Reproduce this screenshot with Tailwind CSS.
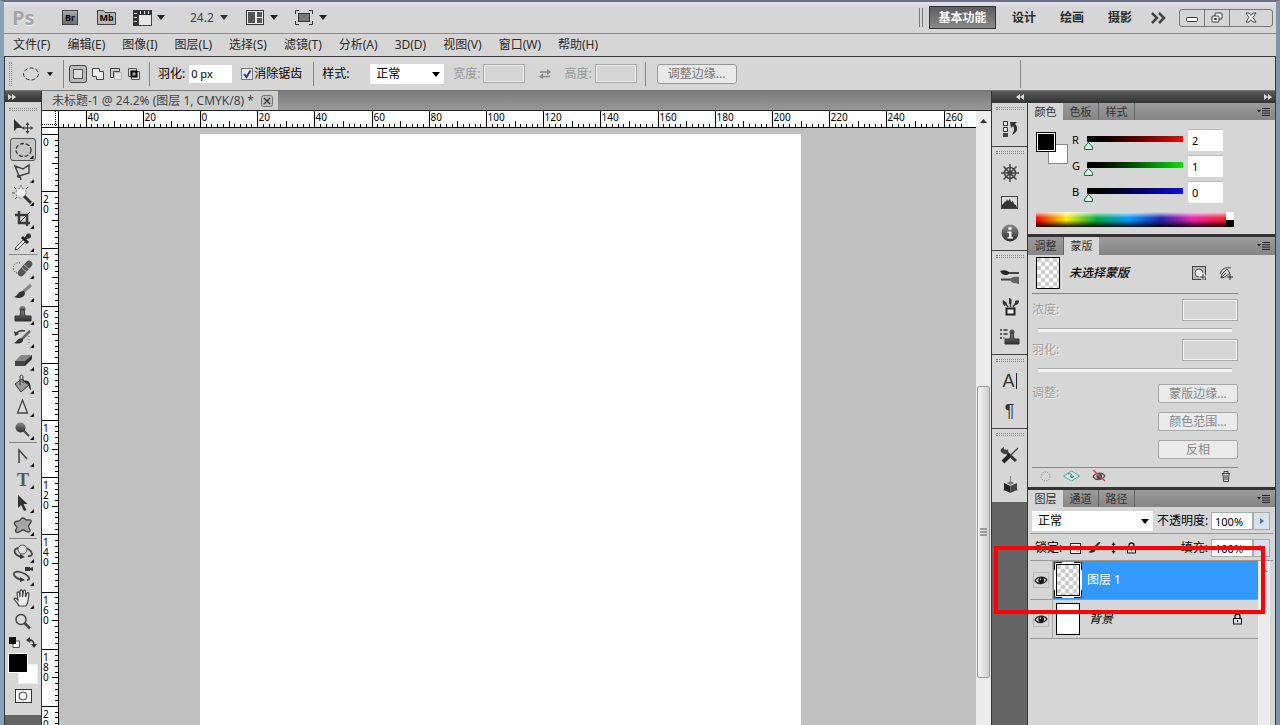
<!DOCTYPE html>
<html lang="zh-CN">
<head>
<meta charset="utf-8">
<title>未标题-1 @ 24.2%</title>
<script src="https://cdn.jsdelivr.net/npm/@tailwindcss/browser@4"></script>
</head>
<body class="h-screen overflow-hidden bg-[#d6d6d6] font-['Noto_Sans','Noto_Sans_CJK_SC',sans-serif] text-xs text-[#2a2a2a]">
<svg class="absolute size-0" aria-hidden="true">
  <symbol id="caret" viewBox="0 0 8 5"><path d="M0 0h8L4 5z" fill="currentColor"/></symbol>
  <symbol id="more" viewBox="0 0 22 22"><path d="M22 17v4h-4z" fill="#000"/></symbol>
  <symbol id="menu" viewBox="0 0 14 8"><path d="M0 2h4L2 4.500z" fill="#222"/><path d="M5 .5h8M5 2.800h8M5 5.100h8M5 7.400h8" stroke="#222"/></symbol>
  <symbol id="eye" viewBox="0 0 14 10"><path d="M1 6C3 1.500 10 .5 13 5M1 6c3 3.500 9 3.500 12-1" fill="none" stroke="#222" stroke-width="1.300"/><circle cx="7.200" cy="5.200" r="2.800" fill="#111"/><circle cx="6.500" cy="4.300" r=".8" fill="#fff"/></symbol>
  <symbol id="lock" viewBox="0 0 11 12"><path d="M3 5V3.500a2.500 2.500 0 0 1 5 0V5" fill="none" stroke="#111" stroke-width="1.300"/><rect x="1.500" y="5.500" width="8" height="5.500" fill="#ddd" stroke="#111"/><path d="M5.500 7v2" stroke="#111"/></symbol>
  <pattern id="checker" width="8" height="8" patternUnits="userSpaceOnUse"><rect width="8" height="8" fill="#fff"/><path d="M0 0h4v4H0zM4 4h4v4H4z" fill="#ccc"/></pattern>
  <linearGradient id="metal" x1="0" y1="0" x2="0" y2="1"><stop offset="0" stop-color="#8a8a8a"/><stop offset="1" stop-color="#2c2c2c"/></linearGradient>
</svg>

<div class="flex h-full flex-col border-t-2 border-r-4 border-l-4 border-t-[#6a6f86] border-r-[#7e93ad] border-l-[#8aa0b8]">

  <!-- Application bar -->
  <header class="flex h-8 shrink-0 items-center border-b border-[#8c8c8c] bg-linear-to-b from-[#e2e2e8] via-[#d6d6d6] via-20% to-[#d6d6d6] pl-2">
    <span class="w-[50px] font-['Open_Sans'] text-xl leading-8 font-bold text-[#a5a5a5] [text-shadow:0_1px_0_#f4f4f4]">Ps</span>
    <button class="flex h-[15px] w-4 items-center justify-center border border-[#444] bg-linear-to-b from-[#aaa] to-[#6e6e6e] text-[9px] font-bold text-black" aria-label="Bridge">Br</button>
    <button class="relative ml-[19px] flex h-[15px] w-[19px] items-center justify-center text-[9px] font-bold text-black" aria-label="Mini Bridge"><svg class="absolute inset-0" width="19" height="15"><path d="M.5.500h6l1.500 2h10.500v12H.5z" fill="#b5b5b5" stroke="#444"/></svg><span class="relative">Mb</span></button>
    <button class="ml-[17px] flex items-center text-[#222]" aria-label="查看额外内容"><svg width="19" height="16"><rect x="5.500" y="4.500" width="13" height="11" fill="#e8e8e8" stroke="#444"/><path d="M0 0h19v5H5v11H0z" fill="#333"/><path d="M1 3.500h3M1 7.500h3M1 11.500h3M7.500 1v3M11.500 1v3M15.500 1v3" stroke="#ddd"/></svg><svg class="ml-[5px]" width="8" height="5"><use href="#caret"/></svg></button>
    <label class="ml-[25px] flex items-center gap-1 text-[#333]"><input class="w-[26px] bg-transparent text-[#444]" value="24.2" aria-label="缩放级别"><svg width="8" height="5"><use href="#caret"/></svg></label>
    <button class="ml-[18px] flex items-center gap-1.5 text-[#222]" aria-label="排列文档"><svg width="18" height="15"><rect x=".5" y=".5" width="17" height="14" fill="#eee" stroke="#333"/><path d="M2 2h7v11H2zM11 2h5v5h-5zM11 8h5v5h-5z" fill="#555"/></svg><svg width="8" height="5"><use href="#caret"/></svg></button>
    <button class="ml-[17px] flex items-center gap-1.5 text-[#222]" aria-label="屏幕模式"><svg width="18" height="15"><path d="M.5 4V.5H4M14 .5h3.500V4M17.500 11v3.500H14M4 14.500H.5V11" fill="none" stroke="#333"/><rect x="3.500" y="3.500" width="11" height="8" fill="#777" stroke="#333"/></svg><svg width="8" height="5"><use href="#caret"/></svg></button>

    <div class="ml-auto flex items-center pr-[3px] font-bold">
      <span class="h-[19px] w-1 border-x border-[#777]"></span>
      <button class="ml-1.5 h-[23px] w-[67px] border border-[#333] bg-linear-to-b from-[#5e5e5e] to-[#8a8a8a] text-white">基本功能</button>
      <button class="ml-4 w-6">设计</button>
      <button class="ml-6 w-6">绘画</button>
      <button class="ml-6 w-6">摄影</button>
      <button class="ml-[19px]" aria-label="显示更多工作区"><svg width="15" height="12" fill="none" stroke="#444" stroke-width="2.500"><path d="M1 1l5 5-5 5M8 1l5 5-5 5"/></svg></button>
      <div class="ml-[13px] flex h-[18px] divide-x divide-[#777] rounded-[3px] border border-[#777]">
        <button class="flex w-[25px] items-center justify-center" aria-label="最小化"><svg class="mt-1" width="12" height="5"><rect x=".5" y=".5" width="11" height="4" rx="1" fill="#fff" stroke="#333"/></svg></button>
        <button class="flex w-[25px] items-center justify-center" aria-label="还原"><svg width="12" height="11" fill="#fff" stroke="#333"><rect x="4" y="1" width="7" height="6" rx="1"/><rect x="1" y="4" width="7" height="6" rx="1"/><path d="M3.500 6.500h2v1h-2z"/></svg></button>
        <button class="flex w-[42px] items-center justify-center" aria-label="关闭"><svg width="12" height="11"><path d="M1 1h3l2 2.500L8 1h3L8 5.500 11 10H8L6 7.500 4 10H1l3-4.500z" fill="#fff" stroke="#444"/></svg></button>
      </div>
    </div>
  </header>

  <!-- Menu bar -->
  <nav class="flex h-[22px] shrink-0 items-center gap-[17px] pl-[9px] whitespace-nowrap">
    <button>文件(F)</button><button>编辑(E)</button><button>图像(I)</button><button>图层(L)</button><button>选择(S)</button><button>滤镜(T)</button><button>分析(A)</button><button>3D(D)</button><button>视图(V)</button><button>窗口(W)</button><button>帮助(H)</button>
  </nav>

  <div class="flex min-h-0 flex-1 flex-col border-t border-r border-l border-[#3a3a3a]">
    <!-- Options bar -->
    <div class="flex h-[34px] shrink-0 items-center border-b border-[#777] text-black">
      <span class="ml-1 h-6 w-[3px] border-x border-dotted border-[#888]"></span>
      <button class="ml-2.5 flex w-[31px] items-center justify-between" aria-label="椭圆选框工具"><svg width="18" height="14"><ellipse cx="9" cy="7" rx="7.500" ry="6" fill="none" stroke="#333" stroke-dasharray="4 2"/></svg><svg width="6" height="4"><use href="#caret"/></svg></button>
      <span class="ml-2.5 h-7 w-px bg-[#888]"></span>
      <div class="ml-[5px] flex items-center gap-1">
        <button class="flex size-[18px] items-center justify-center rounded-[3px] border border-[#444] bg-[#bbb]" aria-label="新选区"><svg width="12" height="12"><rect x="1.500" y="1.500" width="9" height="9" fill="#ddd" stroke="#555"/></svg></button>
        <button aria-label="添加到选区"><svg width="14" height="14"><path d="M1.500 1.500h7v3h4v8h-7v-3h-4z" fill="#eee" stroke="#444"/></svg></button>
        <button aria-label="从选区减去"><svg width="14" height="14"><path d="M5.500 5.500v7h7v-7z" fill="#e2e2e2" stroke="#bbb"/><path d="M1.500 1.500h9v3h-6v6h-3z" fill="#ccc" stroke="#444"/></svg></button>
        <button aria-label="与选区交叉"><svg width="14" height="14"><path d="M1.500 1.500h8v8h-8zM4.500 4.500h8v8h-8z" fill="none" stroke="#555"/><rect x="4.500" y="4.500" width="5" height="5" fill="#aaa" stroke="#000" stroke-width="2"/></svg></button>
      </div>
      <span class="ml-2 h-6 w-px bg-[#888]"></span>
      <label class="ml-2 flex items-center gap-1">羽化:<input class="h-[18px] w-[43px] bg-white pl-0.5 text-[11px]" value="0 px"></label>
      <label class="ml-[9px] flex items-center gap-px"><span class="relative flex size-3"><input type="checkbox" checked class="size-3 appearance-none border border-[#777] bg-[#e9eef6]"><svg class="pointer-events-none absolute inset-0" width="12" height="12"><path d="M3 6l2.500 3L9.500 2.500" fill="none" stroke="#2a3d8a" stroke-width="2"/></svg></span>消除锯齿</label>
      <span class="ml-[11px] h-6 w-px bg-[#888]"></span>
      <label for="style" class="ml-2 w-12">样式:</label>
      <div class="relative"><select id="style" class="h-5 w-[74px] appearance-none bg-white pl-1.5"><option>正常</option></select><svg class="pointer-events-none absolute top-2 right-1" width="8" height="5"><use href="#caret"/></svg></div>
      <label class="ml-[9px] flex items-center gap-[3px] text-[#999]">宽度:<input disabled class="h-[19px] w-[42px] border border-[#aaa] ring-1 ring-[#eee] ring-inset"></label>
      <button disabled class="ml-3.5" aria-label="高度和宽度互换"><svg width="12" height="10"><path d="M1 3h7M4 7.500h7" stroke="#888" stroke-width="1.500"/><path d="M8 0l4 3-4 3zM4 4.500l-4 3 4 2.500z" fill="#888"/></svg></button>
      <label class="ml-[13px] flex items-center gap-[3px] text-[#999]">高度:<input disabled class="h-[19px] w-[42px] border border-[#aaa] ring-1 ring-[#eee] ring-inset"></label>
      <span class="ml-2 h-6 w-px bg-[#888]"></span>
      <button class="ml-[11px] h-5 w-20 rounded-[3px] border border-[#999] bg-[#e9e9e9] leading-4 text-[#777]">调整边缘...</button>
      <span class="mr-[254px] ml-auto h-7 w-px bg-[#888]"></span>
    </div>

    <div class="flex min-h-0 flex-1 bg-[#646464]">
      <!-- Toolbox -->
      <aside class="flex w-[37px] shrink-0 flex-col border-r border-[#333]">
        <button class="flex h-[11px] shrink-0 items-center bg-linear-to-b from-[#5a5a5a] to-[#333] pl-[3px]" aria-label="折叠工具箱"><svg width="8" height="6" fill="#ddd"><path d="M0 0l4 3-4 3zM4 0l4 3-4 3z"/></svg></button>
        <div class="flex flex-col items-center bg-[#d6d6d6] pt-1.5">
          <span class="mb-1 h-[3px] w-7 border-y border-dotted border-[#888]"></span>
          <button class="flex h-[23px] items-center" aria-label="移动工具"><svg width="22" height="22"><path d="M2 3v12l3-3h6z" fill="#333"/><path d="M15.500 8v8M11.500 12h8" stroke="#333"/><path d="M13.500 9l2-3 2 3zM13.500 15l2 3 2-3zM12.500 10l-3 2 3 2zM18.500 10l3 2-3 2z" fill="#444"/></svg></button>
          <button class="flex h-[23px] w-[26px] items-center justify-center rounded-[3px] border border-[#555] bg-[#c6c6c6]" aria-label="椭圆选框工具"><svg width="22" height="21"><ellipse cx="11.500" cy="11" rx="7.500" ry="6.500" fill="none" stroke="#333" stroke-width="1.300" stroke-dasharray="4 1.800"/><use href="#more"/></svg></button>
          <button class="flex h-[23px] items-center" aria-label="多边形套索工具"><svg width="22" height="22"><path d="M3 4l8 3 6-4v8l-10 3zM7 13c-2 0-2 3 1 2M8 14l1 4" fill="none" stroke="#444" stroke-width="1.500"/><use href="#more"/></svg></button>
          <button class="flex h-[23px] items-center" aria-label="快速选择工具"><svg width="22" height="22"><circle cx="9" cy="8" r="5" fill="#eee" stroke="#777" stroke-dasharray="2 2"/><path d="M9 0v2M2 2l2 2M0 8h3M16 2l-2 2M3 14l2-2" stroke="#555"/><path d="M12 11l7 7" stroke="#333" stroke-width="3"/><use href="#more"/></svg></button>
          <button class="flex h-[23px] items-center" aria-label="裁剪工具"><svg width="22" height="22"><g fill="none" stroke="#3a3a3a" stroke-width="2.500"><path d="M7 3v12h11M3 7h12v11"/><path d="M7 15L18 4" stroke-width="1"/></g><use href="#more"/></svg></button>
          <button class="flex h-[23px] items-center" aria-label="吸管工具"><svg width="22" height="22"><path d="M12 8l-8 8-1 3 3-1 8-8" fill="#eee" stroke="#444"/><path d="M10 6l6 6M13 8l3-3" stroke="#222" stroke-width="3"/><circle cx="16.500" cy="5" r="2.500" fill="#333"/><use href="#more"/></svg></button>
          <span class="mt-px mb-[2px] h-px w-7 shrink-0 bg-[#888]"></span>
          <button class="flex h-[23px] items-center" aria-label="污点修复画笔工具"><svg width="22" height="22"><path d="M9 15l8-9" stroke="#555" stroke-width="6.500" stroke-linecap="round"/><path d="M10 10l5 4M12 7l5 4" stroke="#bbb"/><path d="M8 5a5 5 0 1 0-3 10" fill="none" stroke="#333" stroke-dasharray="1 1.500"/><use href="#more"/></svg></button>
          <button class="flex h-[23px] items-center" aria-label="画笔工具"><svg width="22" height="22"><path d="M11 11l8-7" stroke="#888" stroke-width="3"/><path d="M12 10c3 4-2 9-10 6 4-1 3-6 10-6z" fill="#333"/><use href="#more"/></svg></button>
          <button class="flex h-[23px] items-center" aria-label="仿制图章工具"><svg width="22" height="22"><circle cx="10.500" cy="5" r="3" fill="url(#metal)"/><path d="M9 6h3l1 6h6v5H3v-5h5z" fill="url(#metal)" stroke="#333"/><use href="#more"/></svg></button>
          <button class="flex h-[23px] items-center" aria-label="历史记录画笔工具"><svg width="22" height="22"><path d="M10 12l8-8" stroke="#666" stroke-width="2.500"/><path d="M10 11c3 3-1 7-8 5 3-1 3-5 8-5z" fill="#333"/><path d="M4 7c2-3 5-4 9-3" fill="none" stroke="#444" stroke-width="1.500"/><path d="M2 4l1 5 4-2z" fill="#333"/><path d="M17 9v7" stroke="#555" stroke-dasharray="1 2"/><use href="#more"/></svg></button>
          <button class="flex h-[23px] items-center" aria-label="橡皮擦工具"><svg width="22" height="22"><path d="M9 5h11l-7 6H3z" fill="#888"/><path d="M3 11h10v5H3z" fill="#444"/><path d="M20 5v4l-7 7v-5z" fill="#333"/><use href="#more"/></svg></button>
          <button class="flex h-[23px] items-center" aria-label="油漆桶工具"><svg width="22" height="22"><path d="M3 11l7-5 7 6-8 7z" fill="#999" stroke="#333"/><path d="M8 12V4c0-3 3-2 3 0v6" fill="none" stroke="#333"/><path d="M11 8c5-2 8 1 8 9-3-1-1-6-4-6z" fill="#333"/><use href="#more"/></svg></button>
          <button class="flex h-[23px] items-center" aria-label="锐化工具"><svg width="22" height="22"><path d="M10.500 4l5 13h-10z" fill="#ddd" stroke="#444" stroke-width="1.300"/><use href="#more"/></svg></button>
          <button class="flex h-[23px] items-center" aria-label="加深工具"><svg width="22" height="22"><path d="M11 11l6 6" stroke="#444" stroke-width="2"/><circle cx="8.500" cy="8.500" r="5" fill="url(#metal)"/><use href="#more"/></svg></button>
          <span class="mt-px mb-[2px] h-px w-7 shrink-0 bg-[#888]"></span>
          <button class="flex h-[23px] items-center" aria-label="钢笔工具"><svg width="22" height="22"><path d="M7 17V4l8 9" fill="none" stroke="#444" stroke-width="1.500"/><use href="#more"/></svg></button>
          <button class="relative flex h-[23px] w-[22px] items-center justify-center font-['Liberation_Serif'] text-lg leading-5 font-bold text-[#555]" aria-label="横排文字工具">T<svg class="absolute top-0 left-0" width="22" height="22"><use href="#more"/></svg></button>
          <button class="flex h-[23px] items-center" aria-label="路径选择工具"><svg width="22" height="22"><path d="M6 3v13l3-3 3 6 2.500-1-3-6h4z" fill="#333"/><use href="#more"/></svg></button>
          <button class="flex h-[23px] items-center" aria-label="自定形状工具"><svg width="22" height="22"><path d="M9 4c3-3 4 1 6 1s5-1 4 2-4 3-2 6 1 4-1 4-3-2-5-2-5 4-7 2 2-4 1-5-4-3-2-5 4 1 6-3z" fill="#a5a5a5" stroke="#444" stroke-width="1.300"/><use href="#more"/></svg></button>
          <span class="mt-px mb-[2px] h-px w-7 shrink-0 bg-[#888]"></span>
          <button class="flex h-[23px] items-center" aria-label="3D 旋转工具"><svg width="22" height="22"><path d="M6 6c-5 1-5 6 3 9M14 6c7 3 8 9 2 8" fill="none" stroke="#444" stroke-width="1.800"/><circle cx="10.500" cy="7.500" r="4.500" fill="#ddd" stroke="#555"/><path d="M8 12l5 3-5 2z" fill="#333"/><use href="#more"/></svg></button>
          <button class="flex h-[23px] items-center" aria-label="3D 旋转相机工具"><svg width="22" height="22"><path d="M10 15C-1 12 0 5 8 7s12 8 7 8" fill="none" stroke="#444" stroke-width="1.800"/><path d="M8 12l5 3-5 2zM13 2h5v4h-5zM18 3l3-1v4l-3-1z" fill="#333"/><use href="#more"/></svg></button>
          <button class="flex h-[23px] items-center" aria-label="抓手工具"><svg width="22" height="22"><path d="M7 18c-1-3-4-5-5-7 1-2 3 0 4 1L5 5c1-2 2-1 2.500 0L8 9V3c1-2 2-1 2.500 0v6l1-6c1-1.500 2-1 2 0v6l1.500-4c1-1 2 0 2 1-1 4 0 8-3 12z" fill="#eee" stroke="#444" stroke-width="1.200"/><use href="#more"/></svg></button>
          <button class="flex h-[23px] items-center" aria-label="缩放工具"><svg width="22" height="22"><circle cx="9" cy="8.500" r="5" fill="#ddd" stroke="#444" stroke-width="1.500"/><path d="M12.500 12l5.500 5.500" stroke="#444" stroke-width="2.500"/></svg></button>
          <div class="mt-0.5 flex h-3.5 w-7 items-center justify-between">
            <button aria-label="默认前景色和背景色"><svg width="11" height="11"><path d="M4 4h6.500v6.500H4z" fill="#fff" stroke="#555"/><path d="M0 0h7v7H0z" fill="#111"/></svg></button>
            <button aria-label="切换前景色和背景色"><svg width="11" height="11"><path d="M3 3c4 0 5 2 5 5" fill="none" stroke="#333" stroke-width="1.500"/><path d="M0 3l4-3v6zM5 7h6l-3 4z" fill="#333"/></svg></button>
          </div>
          <div class="relative mt-1 h-[31px] w-[30px]">
            <button class="absolute right-0 bottom-0 size-5 border border-[#eee] bg-white" aria-label="背景色"></button>
            <button class="absolute top-0 left-0 size-5 border border-white bg-black" aria-label="前景色"></button>
          </div>
          <button class="mt-[5px] mb-3 flex h-3.5 w-[17px] items-center justify-center border border-[#333] bg-white" aria-label="以快速蒙版模式编辑"><svg width="10" height="10"><circle cx="5" cy="5" r="4" fill="#fff" stroke="#444"/></svg></button>
        </div>
      </aside>

      <!-- Document window -->
      <main class="flex min-w-0 flex-1 flex-col">
        <div class="flex h-[19px] shrink-0 items-end bg-linear-to-b from-[#7c7c7c] to-[#989898]">
          <div class="flex h-[19px] w-[236px] items-center bg-[#cfcfcf] pl-2.5 text-[#444]"><span class="flex-1 whitespace-nowrap">未标题-1 @ 24.2% (图层 1, CMYK/8) *</span><button class="mr-[5px]" aria-label="关闭文档"><svg width="12" height="12"><rect x=".5" y=".5" width="11" height="11" rx="2" fill="#bbb" stroke="#777"/><path d="M3 3l6 6M9 3L3 9" stroke="#333" stroke-width="1.300"/></svg></button></div>
        </div>
        <div class="flex min-h-0 flex-1 border-t border-[#222] bg-[#f0f0f0]">
          <div class="flex min-w-0 flex-1 flex-col">
            <div class="flex h-[17px] shrink-0 border-b border-black bg-white">
              <svg class="shrink-0 border-r border-black" width="17" height="17"><path d="M0 13.500h17M13.500 0v17" stroke="#000" stroke-dasharray="1 1"/></svg>
              <svg id="ruler-x" class="h-4 min-w-0 flex-1 text-[10px]"></svg>
            </div>
            <div class="flex min-h-0 flex-1">
              <svg id="ruler-y" class="w-[17px] shrink-0 border-r border-black bg-white text-[10px]"></svg>
              <div class="min-w-0 flex-1 overflow-hidden bg-[#c0c0c0] pt-[6px] pl-[141px]">
                <div class="h-full w-[601px] bg-white"></div>
              </div>
            </div>
          </div>
          <div class="flex w-[15px] shrink-0 flex-col items-center bg-[#ececec]">
            <svg class="mt-2 shrink-0" width="7" height="4"><path d="M0 4h7L3.500 0z" fill="#333"/></svg>
            <div class="mt-[263px] flex h-[292px] w-[13px] shrink-0 items-center justify-center rounded-[2px] border border-[#999] bg-linear-to-r from-[#f4f4f4] to-[#cfcfcf]"><svg width="7" height="8"><path d="M0 1h7M0 4h7M0 7h7" stroke="#555"/></svg></div>
          </div>
        </div>
      </main>

      <!-- Icon dock and panels -->
      <section class="flex w-[284px] shrink-0 flex-col border-l border-[#333]">
        <div class="flex h-3 shrink-0 items-center bg-linear-to-b from-[#5a5a5a] to-[#333]">
          <button class="ml-6" aria-label="展开面板"><svg width="8" height="6" fill="#ddd"><path d="M4 0L0 3l4 3zM8 0L4 3l4 3z"/></svg></button>
          <button class="mr-[3px] ml-auto" aria-label="折叠为图标"><svg width="8" height="6" fill="#ddd"><path d="M0 0l4 3-4 3zM4 0l4 3-4 3z"/></svg></button>
        </div>
        <div class="flex min-h-0 flex-1">
          <div class="w-9 shrink-0 border-r border-[#333] *:flex *:flex-col *:items-center *:border-b *:border-[#444] *:bg-[#d6d6d6] *:pt-1 *:pb-0.5">
            <div>
              <span class="mb-1 h-[3px] w-7 border-y border-dotted border-[#888]"></span>
              <button class="flex h-[30px] items-center" aria-label="历史记录"><svg width="20" height="20"><path d="M3.500 2.500h4v4h-4zM3.500 8.500h4v4h-4z" fill="#eee" stroke="#333"/><path d="M3 14h5v4H3z" fill="#444"/><path d="M10 3h7l-2 2c4 4 2 9-3 11 2-4 3-6 1-9l-2 2z" fill="#333"/></svg></button>
            </div>
            <div>
              <span class="mb-1 h-[3px] w-7 border-y border-dotted border-[#888]"></span>
              <button class="flex h-[30px] items-center" aria-label="导航器"><svg width="20" height="20" fill="none" stroke="#444" stroke-width="1.500"><circle cx="10" cy="10" r="5.500"/><circle cx="10" cy="10" r="1.800"/><path d="M10 1v18M1 10h18M3.500 3.500l13 13M16.500 3.500l-13 13"/></svg></button>
              <button class="flex h-[30px] items-center" aria-label="直方图"><svg width="20" height="20"><rect x="1.500" y="3.500" width="16" height="12" fill="#ddd" stroke="#444"/><path d="M2 15v-3l2-2 1-2 1 1 1-3 1 2 2-2 1 3 2-1 1 3 2 1 1 3z" fill="#333"/></svg></button>
              <button class="flex h-[30px] items-center" aria-label="信息"><svg width="20" height="20"><circle cx="10" cy="10" r="8.500" fill="url(#metal)"/><circle cx="10" cy="5.500" r="1.700" fill="#fff"/><path d="M7.500 8.500h4V14h1.500v1.500h-5.500V14H9v-4H7.500z" fill="#fff"/></svg></button>
            </div>
            <div>
              <span class="mb-1 h-[3px] w-7 border-y border-dotted border-[#888]"></span>
              <button class="flex h-[30px] items-center" aria-label="画笔"><svg width="20" height="20"><path d="M8 6h11" stroke="#444" stroke-width="2"/><path d="M0 4c5-2 9 0 9 2s-4 3-7 1z" fill="#222"/><path d="M1 12.500h10" stroke="#444" stroke-width="2"/><path d="M10 12c3-3 7-2 9-2v7c-3-1-7 0-9-4z" fill="#666"/></svg></button>
              <button class="flex h-[30px] items-center" aria-label="画笔预设"><svg width="20" height="20"><path d="M8 10L5 6M10.500 10V5M13 10l3-4" stroke="#444" stroke-width="1.500"/><path d="M3 3l4 3-2 3c-2-1-3-3-2-6zM9 1c3 0 3 3 2 6H9zM15 4c2-1 4-1 4 0 0 3-2 4-4 4z" fill="#333"/><rect x="6.500" y="11.500" width="8" height="6" fill="#eee" stroke="#222" stroke-width="2"/></svg></button>
              <button class="flex h-[30px] items-center" aria-label="仿制源"><svg width="20" height="20"><path d="M0 3h2M0 7h2M0 11h2M3.500 3h4M3.500 7h4M3.500 11h1" stroke="#333" stroke-width="1.500"/><circle cx="12" cy="5" r="2.500" fill="#555"/><path d="M11 6h2l1 6h5v5H5v-5h5z" fill="url(#metal)" stroke="#333"/></svg></button>
            </div>
            <div>
              <span class="mb-1 h-[3px] w-7 border-y border-dotted border-[#888]"></span>
              <button class="flex h-[30px] items-center gap-px font-['Liberation_Sans'] text-lg text-[#333]" aria-label="字符">A<span class="h-4 w-px bg-[#222]"></span></button>
              <button class="flex h-[30px] items-center font-['Liberation_Sans'] text-lg text-[#333]" aria-label="段落">¶</button>
            </div>
            <div class="border-b-0!">
              <span class="mb-1 h-[3px] w-7 border-y border-dotted border-[#888]"></span>
              <button class="flex h-[30px] items-center" aria-label="工具预设"><svg width="20" height="20"><path d="M4 5l12 11" stroke="#333" stroke-width="3"/><path d="M1 4l3-2v3l2 1 2-2c1 3-1 6-4 5s-4-3-3-5z" fill="#444"/><path d="M18 3l-7 7" stroke="#444" stroke-width="1.500"/><path d="M10 10l-7 7" stroke="#222" stroke-width="4"/></svg></button>
              <button class="flex h-[30px] items-center" aria-label="3D"><svg width="20" height="20"><path d="M10.500 1v8M3 15h15" stroke="#888"/><path d="M4 8l6.500 3v7L4 15z" fill="#222"/><path d="M17 8l-6.500 3v7l6.500-3z" fill="#444"/><path d="M7 8l3.500-2L14 8l-3.500 2z" fill="#777"/></svg></button>
            </div>
          </div>

          <div class="flex min-w-0 flex-1 flex-col bg-[#d6d6d6]">
            <!-- Colour panel -->
            <div class="flex h-[134px] shrink-0 flex-col border-b-3 border-[#333]">
              <div class="flex h-[17px] shrink-0 items-stretch bg-linear-to-b from-[#9c9c9c] to-[#858585] text-[11px] leading-4 text-[#333]">
                <button class="w-[35px] bg-[#d6d6d6]">颜色</button><button class="w-9 border-r border-[#666]">色板</button><button class="w-9 border-r border-[#666]">样式</button>
                <button class="mr-1 ml-auto" aria-label="面板菜单"><svg width="14" height="8"><use href="#menu"/></svg></button>
              </div>
              <div class="flex pt-[9px] pl-2 text-[11px] text-black">
                <div class="relative mt-[3px] h-8 w-9">
                  <button class="absolute top-3 left-3 size-5 border border-[#888] bg-white" aria-label="背景色"></button>
                  <button class="absolute top-0 left-0 size-5 border border-black bg-black ring-1 ring-white ring-inset" aria-label="前景色"></button>
                </div>
                <div class="flex flex-col gap-1">
                  <div class="flex h-[22px] items-center"><label for="r" class="w-2.5">R</label><div class="relative mt-1.5 h-3.5"><input id="r" type="range" max="255" value="2" class="h-3.5 w-[106px] appearance-none bg-linear-to-r from-black to-[#e01010] bg-[size:96px_6px] bg-[position:5px_0] bg-no-repeat [&::-webkit-slider-thumb]:opacity-0"><svg class="pointer-events-none absolute top-1.5 left-0.5" width="9" height="8"><path d="M4.500.500l4 4.500v2.500H.5V5z" fill="#dfd" stroke="#264"/></svg></div><input class="h-[22px] w-[35px] border-t border-[#bbb] bg-white pl-1" value="2" aria-label="R 值"></div>
                  <div class="flex h-[22px] items-center"><label for="g" class="w-2.5">G</label><div class="relative mt-1.5 h-3.5"><input id="g" type="range" max="255" value="1" class="h-3.5 w-[106px] appearance-none bg-linear-to-r from-black to-[#10e010] bg-[size:96px_6px] bg-[position:5px_0] bg-no-repeat [&::-webkit-slider-thumb]:opacity-0"><svg class="pointer-events-none absolute top-1.5 left-0.5" width="9" height="8"><path d="M4.500.500l4 4.500v2.500H.5V5z" fill="#dfd" stroke="#264"/></svg></div><input class="h-[22px] w-[35px] border-t border-[#bbb] bg-white pl-1" value="1" aria-label="G 值"></div>
                  <div class="flex h-[22px] items-center"><label for="b" class="w-2.5">B</label><div class="relative mt-1.5 h-3.5"><input id="b" type="range" max="255" value="0" class="h-3.5 w-[106px] appearance-none bg-linear-to-r from-black to-[#1010e0] bg-[size:96px_6px] bg-[position:5px_0] bg-no-repeat [&::-webkit-slider-thumb]:opacity-0"><svg class="pointer-events-none absolute top-1.5 left-0.5" width="9" height="8"><path d="M4.500.500l4 4.500v2.500H.5V5z" fill="#dfd" stroke="#264"/></svg></div><input class="h-[22px] w-[35px] border-t border-[#bbb] bg-white pl-1" value="0" aria-label="B 值"></div>
                </div>
              </div>
              <div class="mt-[9px] ml-2 flex h-[15px] w-[198px]">
                <div class="flex-1 bg-[linear-gradient(to_bottom,#fffc,#fff0_40%,#0000_55%,#000e),linear-gradient(to_right,#e00,#fe0_16%,#0a4_32%,#09f_49%,#22a_66%,#e2a_83%,#e22)]"></div>
                <div class="w-2 bg-linear-to-b from-white from-50% to-black to-50%"></div>
              </div>
            </div>

            <!-- Masks panel -->
            <div class="flex h-[253px] shrink-0 flex-col border-b-3 border-[#333]">
              <div class="flex h-[18px] shrink-0 items-stretch bg-linear-to-b from-[#9c9c9c] to-[#858585] text-[11px] leading-4 text-[#333]">
                <button class="w-9 border-r border-[#666]">调整</button><button class="w-[35px] bg-[#d6d6d6]">蒙版</button>
                <button class="mr-1 ml-auto" aria-label="面板菜单"><svg width="14" height="8"><use href="#menu"/></svg></button>
              </div>
              <div class="mr-[37px] ml-1 flex flex-col text-[#a0a0a0] [text-shadow:1px_1px_0_#f2f2f2]">
                <div class="flex h-[39px] items-center border-b border-[#888] pr-1 pb-0.5 pl-1">
                  <svg class="border border-black" width="24" height="32"><rect width="24" height="32" fill="url(#checker)"/></svg>
                  <span class="ml-[9px] flex-1 font-medium text-black italic [text-shadow:none]">未选择蒙版</span>
                  <button aria-label="添加像素蒙版"><svg width="15" height="15"><rect x=".5" y=".5" width="13" height="13" fill="#bbb" stroke="#444"/><circle cx="7" cy="7" r="4" fill="#eee" stroke="#555"/><path d="M11 7v7M7.500 10.500h7" stroke="#fff" stroke-width="3"/><path d="M11 8v6M8 11h6" stroke="#222"/></svg></button>
                  <button class="ml-3" aria-label="添加矢量蒙版"><svg width="15" height="14" fill="none" stroke="#444"><path d="M1 8C3 2 7 1 12 2M2 12l1-4 5-5 3 4-5 4zM2 12l5-5"/><path d="M11 8v6M8 11h6" stroke="#222"/></svg></button>
                </div>
                <label class="mt-[5px] flex h-[22px] items-center justify-between">浓度:<input disabled class="h-[22px] w-14 border border-[#aaa] ring-1 ring-[#f2f2f2] ring-inset"></label>
                <input disabled type="range" class="mx-1.5 mt-[7px] h-1 appearance-none border-t border-[#aaa] bg-[#f4f4f4] [&::-webkit-slider-thumb]:appearance-none [&::-webkit-slider-thumb]:opacity-0" aria-label="浓度">
                <label class="mt-[7px] flex h-[22px] items-center justify-between">羽化:<input disabled class="h-[22px] w-14 border border-[#aaa] ring-1 ring-[#f2f2f2] ring-inset"></label>
                <input disabled type="range" class="mx-1.5 mt-[7px] h-1 appearance-none border-t border-[#aaa] bg-[#f4f4f4] [&::-webkit-slider-thumb]:appearance-none [&::-webkit-slider-thumb]:opacity-0" aria-label="羽化">
                <div class="mt-3 flex items-start justify-between">
                  <span class="leading-[18px]">调整:</span>
                  <div class="flex flex-col gap-[9px] text-[#888]">
                    <button class="h-[19px] w-20 rounded-[2px] border border-[#aaa] bg-[#ebebeb] leading-4">蒙版边缘...</button>
                    <button class="h-[19px] w-20 rounded-[2px] border border-[#aaa] bg-[#ebebeb] leading-4">颜色范围...</button>
                    <button class="h-[19px] w-20 rounded-[2px] border border-[#aaa] bg-[#ebebeb] leading-4">反相</button>
                  </div>
                </div>
                <div class="mt-2 flex h-[17px] items-center border-t border-[#888] pr-[7px] pl-2">
                  <button aria-label="载入选区"><svg width="11" height="11"><circle cx="5.500" cy="5.500" r="4.500" fill="none" stroke="#777" stroke-dasharray="1 1.500"/></svg></button>
                  <button class="ml-3" aria-label="应用蒙版"><svg width="17" height="12"><path d="M8.500 1l8 5-8 5-8-5z" fill="#d5f0ea" stroke="#5aa39a"/><path d="M5 4c4-1 4 1 4 4M7 6l2 2 2-2" fill="none" stroke="#276"/></svg></button>
                  <button class="ml-3" aria-label="停用蒙版"><svg width="14" height="12"><g transform="translate(0 1)"><use href="#eye" width="14" height="10" opacity=".7"/></g><path d="M1 0l12 11" stroke="#e35" stroke-width="1.300"/></svg></button>
                  <button class="ml-auto" aria-label="删除蒙版"><svg width="10" height="12" fill="none" stroke="#444"><path d="M1 3.500h8M3 3V1.500h4V3M2 4l.5 7.500h5L8 4M4 5v5M6 5v5"/></svg></button>
                </div>
              </div>
            </div>

            <!-- Layers panel -->
            <div class="relative flex min-h-0 flex-1 flex-col">
              <div class="flex h-[17px] shrink-0 items-stretch bg-linear-to-b from-[#9c9c9c] to-[#858585] text-[11px] leading-4 text-[#333]">
                <button class="w-[35px] bg-[#d6d6d6]">图层</button><button class="w-9 border-r border-[#666]">通道</button><button class="w-9 border-r border-[#666]">路径</button>
                <button class="mr-1 ml-auto" aria-label="面板菜单"><svg width="14" height="8"><use href="#menu"/></svg></button>
              </div>
              <div class="mx-0.5 flex h-[27px] shrink-0 items-center border-b border-[#999] pt-0.5 pr-[3px] pl-0.5 text-black">
                <div class="relative"><select class="h-5 w-[121px] appearance-none bg-white pl-1.5" aria-label="混合模式"><option>正常</option></select><svg class="pointer-events-none absolute top-2 right-1" width="8" height="5"><use href="#caret"/></svg></div>
                <label for="opacity" class="ml-1 flex-1 whitespace-nowrap">不透明度:</label>
                <input id="opacity" class="h-[18px] w-[42px] border border-[#aaa] bg-white pl-[3px] text-[11px]" value="100%">
                <button class="flex h-[18px] w-[17px] items-center justify-center border border-[#aaa] bg-[#d9e2ec]" aria-label="不透明度滑块"><svg width="4" height="6"><path d="M0 0l4 3-4 3z" fill="#47a"/></svg></button>
              </div>
              <div class="mx-0.5 flex h-[27px] shrink-0 items-center border-b border-[#999] pt-0.5 pr-[3px] pl-[5px] text-black">
                <span class="w-[33px]">锁定:</span>
                <div class="flex items-center gap-[7px]">
                  <button class="ml-0.5" aria-label="锁定透明像素"><svg width="11" height="11"><rect x=".5" y=".5" width="10" height="10" fill="#eee" stroke="#222"/><path d="M2 2h4v4H2zM6 6h3v3H6z" fill="#ccc"/></svg></button>
                  <button aria-label="锁定图像像素"><svg width="13" height="12"><path d="M6 6l6-6" stroke="#333" stroke-width="2"/><path d="M7 6c2 3-2 6-7 4 3 0 3-4 7-4z" fill="#222"/></svg></button>
                  <button aria-label="锁定位置"><svg width="11" height="12"><path d="M5.500 1v10M1 6h9" stroke="#222"/><path d="M3.500 3l2-3 2 3zM3.500 9l2 3 2-3zM2 4L0 6l2 2zM9 4l2 2-2 2z" fill="#222"/></svg></button>
                  <button aria-label="锁定全部"><svg width="11" height="12"><use href="#lock"/></svg></button>
                </div>
                <label for="fill" class="mr-[3px] ml-auto">填充:</label>
                <input id="fill" class="h-[18px] w-[42px] border border-[#aaa] bg-white pl-[3px] text-[11px]" value="100%">
                <button class="flex h-[18px] w-[17px] items-center justify-center border border-[#aaa] bg-[#d9e2ec]" aria-label="填充滑块"><svg width="4" height="6"><path d="M0 0l4 3-4 3z" fill="#47a"/></svg></button>
              </div>
              <div class="mr-[5px] ml-0.5 flex min-h-0 flex-1">
                <ul class="min-w-0 flex-1 *:flex *:h-[39px] *:items-stretch *:border-b *:border-[#999]">
                  <li>
                    <button class="flex w-[23px] items-center justify-center border-r border-[#aaa]" aria-label="隐藏图层 1"><span class="flex size-4 items-center justify-center border border-[#bbb]"><svg class="shrink-0" width="14" height="10"><use href="#eye"/></svg></span></button>
                    <div class="flex flex-1 items-center bg-[#3399ff] pl-px text-white"><span class="relative border border-white bg-white p-px"><svg class="border border-black" width="24" height="32"><rect width="24" height="32" fill="url(#checker)"/></svg><svg class="absolute -top-px -left-px" width="28" height="36" fill="none" stroke="#000"><path d="M.5 8V.5H8M20 .5h7.500V8M27.500 28v7.500H20M8 35.500H.5V28"/></svg></span><span class="ml-[5px]">图层 1</span></div>
                  </li>
                  <li>
                    <button class="flex w-[23px] items-center justify-center border-r border-[#aaa]" aria-label="隐藏背景"><span class="flex size-4 items-center justify-center border border-[#bbb]"><svg class="shrink-0" width="14" height="10"><use href="#eye"/></svg></span></button>
                    <div class="flex flex-1 items-center pr-[15px] pl-[3px] text-black"><span class="h-8 w-6 border border-black bg-white"></span><span class="ml-[9px] flex-1 italic">背景</span><svg width="11" height="12"><use href="#lock"/></svg></div>
                  </li>
                </ul>
                <div class="flex w-3 shrink-0 justify-center bg-[#ececec] pt-[7px]"><svg width="7" height="4"><path d="M0 4h7L3.500 0z" fill="#888"/></svg></div>
              </div>
              <!-- Highlight around the new layer -->
              <div class="pointer-events-none absolute top-14 -left-[34px] z-10 h-[68px] w-[271px] border-4 border-[#fe0000]"></div>
            </div>
          </div>
        </div>
      </section>
    </div>
  </div>
</div>

<script>
// Rulers: one labelled mark every 20 mm, a short tick every 2 mm.
const PX_PER_MM = 2.86;
function ruler(id, origin, from, to, vertical) {
  let out = '';
  for (let mm = from; mm <= to; mm += 2) {
    const p = Math.round(origin + mm * PX_PER_MM) + 0.5;
    const len = mm % 20 === 0 ? 17 : mm % 10 === 0 ? 6 : 3;
    out += vertical
      ? `<path d="M${16 - len} ${p}h${len}" stroke="#000"/>`
      : `<path d="M${p} ${16 - len}v${len}" stroke="#000"/>`;
    if (mm % 20 === 0) {
      const label = String(Math.abs(mm));
      out += vertical
        ? [...label].map((d, i) => `<text x="1" y="${p + 11 + i * 10}">${d}</text>`).join('')
        : `<text x="${p + 1}" y="10">${label}</text>`;
    }
  }
  document.getElementById(id).innerHTML = out;
}
ruler('ruler-x', 141, -48, 266, false);
ruler('ruler-y', 6, 0, 220, true);
</script>
</body>
</html>
